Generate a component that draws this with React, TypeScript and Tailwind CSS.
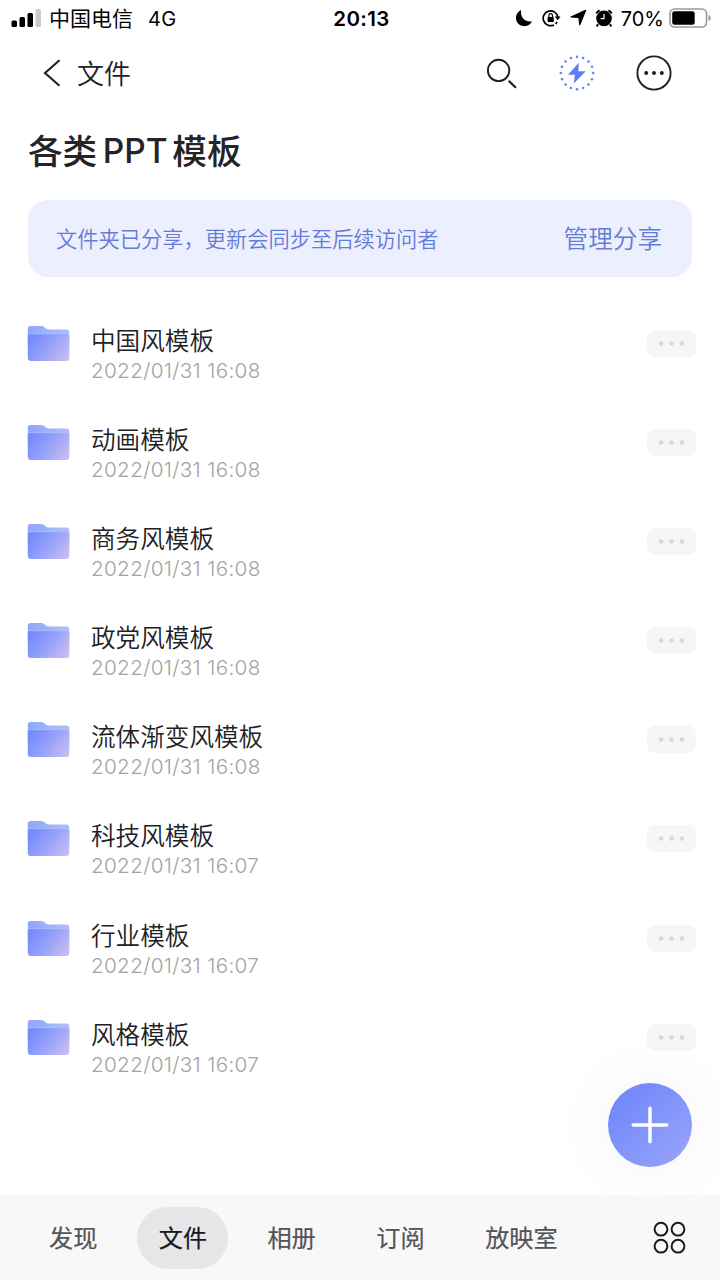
import React from 'react';

const folders = [
  { name: '中国风模板', date: '2022/01/31 16:08' },
  { name: '动画模板', date: '2022/01/31 16:08' },
  { name: '商务风模板', date: '2022/01/31 16:08' },
  { name: '政党风模板', date: '2022/01/31 16:08' },
  { name: '流体渐变风模板', date: '2022/01/31 16:08' },
  { name: '科技风模板', date: '2022/01/31 16:07' },
  { name: '行业模板', date: '2022/01/31 16:07' },
  { name: '风格模板', date: '2022/01/31 16:07' },
];

const rayAngles = Array.from({ length: 16 }, (_, i) => (i * Math.PI) / 8);

function StatusBar() {
  return (
    <div className="grid h-9 grid-cols-[1fr_auto_1fr] items-center pl-[11px] pr-[8px] text-[20px] leading-[36px] text-black">
      <div className="flex items-center">
        <svg width="31" height="20" viewBox="0 0 31 20">
          <rect x="0.5" y="12.5" width="5.5" height="6.5" rx="1.5" />
          <rect x="8.5" y="9" width="5.5" height="10" rx="1.5" />
          <rect x="16.5" y="5" width="5.5" height="14" rx="1.5" />
          <rect x="24.5" y="1" width="5.5" height="18" rx="1.5" fill="#cbcbcb" />
        </svg>
        <span className="ml-[7px] h-[35px] text-[21px]">中国电信</span>
        <span className="ml-[15px] h-[35px] text-[20px] tracking-[0.4px]">4G</span>
      </div>
      <div className="h-[35px] text-[20.5px] font-semibold tracking-[0.4px]">20:13</div>
      <div className="flex items-center justify-end">
        <svg width="18" height="18" viewBox="0 0 18 18">
          <path d="M6.2 1A8.4 8.4 0 1 0 17 12.2C11 14 4.6 8.6 6.2 1Z" />
        </svg>
        <svg className="ml-[9px]" width="19" height="18" viewBox="0 0 19 18">
          <path d="M11.9 15.9A7.4 7.4 0 1 1 15.9 8.2M15 12.8a7.4 7.4 0 0 1-1.4 2" fill="none" stroke="black" strokeWidth="1.7" />
          <path d="m12.7 7.5 5.8 0-2.7 3.7Z" />
          <rect x="5.6" y="8" width="6.2" height="4.9" rx=".7" />
          <path d="M6.9 8V6.5a1.8 1.8 0 0 1 3.6 0V8" fill="none" stroke="black" strokeWidth="1.2" />
        </svg>
        <svg className="ml-[8px]" width="18" height="18" viewBox="0 0 18 18">
          <path d="M16.6 1.4 10.7 15.8 10 9.3 9.2 8.5 2 8Z" stroke="black" strokeWidth="1.2" strokeLinejoin="round" />
        </svg>
        <svg className="ml-[8px]" width="18" height="18" viewBox="0 0 18 18">
          <circle cx="9" cy="9.4" r="7.8" />
          <path d="M1.2 4.2 4.5 1.2M16.8 4.2 13.5 1.2M3.2 15.3 1.7 17.3M14.8 15.3l1.5 2" stroke="black" strokeWidth="2" />
          <path d="M9 5v4.7H5.7" fill="none" stroke="white" strokeWidth="1.2" />
        </svg>
        <span className="ml-[8px] h-[35px] text-[20px]">70%</span>
        <svg className="ml-[5px]" width="43" height="20" viewBox="0 0 43 20">
          <rect x="1" y="1" width="36.5" height="18" rx="4.5" fill="none" stroke="#9a9a9a" strokeWidth="1.6" />
          <rect x="3.2" y="3.2" width="22.5" height="13.6" rx="2.3" />
          <path d="M39.5 7v6c3-1 3-5 0-6Z" fill="#9a9a9a" />
        </svg>
      </div>
    </div>
  );
}

function Header() {
  return (
    <header className="flex h-[74px] items-center pl-[43px] pr-[48px] text-[#1f2024]">
      <svg width="18" height="28" viewBox="0 0 18 28" fill="none" stroke="currentColor" strokeWidth="2.1">
        <path d="M16.5 1.2 2 14 16.5 26.8" />
      </svg>
      <h2 className="ml-[16px] pt-[3px] text-[27px] font-[350] leading-[40px]">文件</h2>
      <div className="ml-auto flex items-center">
        <svg width="32" height="32" viewBox="0 0 32 32" fill="none" stroke="currentColor" strokeWidth="1.9">
          <circle cx="12.6" cy="13.4" r="10.7" />
          <path d="m22.7 23.8 7.2 6.9" strokeWidth="2.2" />
        </svg>
        <svg className="ml-[41px]" width="36" height="36" viewBox="0 0 36 36" fill="#607cf6">
          {rayAngles.map((a) => (
            <circle key={a} cx={18 + 16.2 * Math.cos(a)} cy={18 + 16.2 * Math.sin(a)} r="1.25" />
          ))}
          <path d="M19.7 7.8 9.1 19.7h6.8L14.8 28.6 26.8 16.3h-7.4Z" />
        </svg>
        <svg className="ml-[41px]" width="36" height="36" viewBox="0 0 36 36">
          <circle cx="18" cy="18" r="16.6" fill="none" stroke="currentColor" strokeWidth="1.9" />
          <circle cx="10.2" cy="18" r="2" fill="currentColor" />
          <circle cx="18" cy="18" r="2" fill="currentColor" />
          <circle cx="25.8" cy="18" r="2" fill="currentColor" />
        </svg>
      </div>
    </header>
  );
}

function FolderIcon() {
  return (
    <svg className="mt-[10px] shrink-0" width="44" height="37" viewBox="0 0 44 37">
      <defs>
        <linearGradient id="folder-front" x1="0" y1=".3" x2="1" y2=".8">
          <stop offset="0" stopColor="#748bfb" />
          <stop offset=".45" stopColor="#949ffa" />
          <stop offset="1" stopColor="#c5bdf1" />
        </linearGradient>
        <linearGradient id="folder-back" x1="0" y1="0" x2="1" y2="0">
          <stop offset="0" stopColor="#8fa7f8" />
          <stop offset="1" stopColor="#acc1f8" />
        </linearGradient>
      </defs>
      <g transform="translate(0 .5)">
        <path d="M.8 3.3Q.8.6 3.5.6H14q2 0 3.2 1l2 1.6q1 .8 2.5.8H39.5q2.8 0 2.8 2.8V20H.8Z" fill="url(#folder-back)" />
        <path d="M.8 10q0-2 2-2h37.5q2 0 2 2v22.4q0 3-3 3H3.8q-3 0-3-3Z" fill="url(#folder-front)" />
        <path d="M1.3 8.2h40.6" stroke="#b0c4ff" strokeWidth=".8" />
      </g>
    </svg>
  );
}

function FolderRow({ name, date }: { name: string; date: string }) {
  return (
    <li className="flex h-[99.1px] items-start">
      <FolderIcon />
      <div className="ml-[20px] pt-[10px]">
        <div className="text-[24.6px] font-[350] leading-[32px] text-[#202124]">{name}</div>
        <div className="mt-[-1px] text-[20.7px] font-[350] leading-[29px] tracking-[0.32px] text-[#a3a3a6]">{date}</div>
      </div>
      <button className="ml-auto mt-[15px] flex h-[27px] w-[49px] items-center justify-center rounded-[8px] bg-[#f6f6f8]">
        <svg width="27" height="5" viewBox="0 0 27 5" fill="#d8d8dc">
          <circle cx="3.1" cy="2.5" r="2.3" />
          <circle cx="13.5" cy="2.5" r="2.3" />
          <circle cx="23.9" cy="2.5" r="2.3" />
        </svg>
      </button>
    </li>
  );
}

function BottomNav() {
  return (
    <nav className="flex h-[85px] items-center bg-[#f8f8f8] pl-[49px] pr-[34px] text-[24.2px] leading-[36px] text-[#545456] [-webkit-text-stroke:0.2px_currentColor]">
      <span className="pt-[3px]">发现</span>
      <span className="ml-[40px] flex h-[62px] w-[91px] items-center justify-center rounded-[31px] bg-[#e6e6e9] pt-[3px] text-[#18181b]">文件</span>
      <span className="ml-[39px] pt-[3px]">相册</span>
      <span className="ml-[60.5px] pt-[3px]">订阅</span>
      <span className="ml-[60.5px] pt-[3px]">放映室</span>
      <svg className="ml-auto" width="33" height="33" viewBox="0 0 33 33" fill="none" stroke="#1c1c20" strokeWidth="2">
        <circle cx="8" cy="8.2" r="6.4" />
        <circle cx="25" cy="8.2" r="6.4" />
        <circle cx="8" cy="25.2" r="6.4" />
        <circle cx="25" cy="25.2" r="6.4" />
      </svg>
    </nav>
  );
}

export default function App() {
  return (
    <div className="relative flex h-[1280px] w-[720px] flex-col overflow-hidden bg-white font-['Inter','Noto_Sans_CJK_SC',sans-serif]">
      <StatusBar />
      <Header />
      <main className="flex-1 pl-[27px] pr-[24px]">
        <h1 className="mt-[17px] flex h-[48px] items-center pl-px text-[34.6px] font-medium leading-[48px] text-[#242426]">
          <span>各类</span>
          <span className="ml-[5.5px] text-[33.5px] tracking-[0.1px]">PPT</span>
          <span className="ml-[4.5px]">模板</span>
        </h1>
        <section className="ml-px mr-[4px] mt-[25px] flex h-[77px] items-center justify-between rounded-[20px] bg-[#eceffd] pl-[28px] pr-[30px] text-[#657bd8]">
          <p className="text-[21.25px] font-[350] leading-[32px]">文件夹已分享，更新会同步至后续访问者</p>
          <button className="pt-px text-[24.6px] font-[350] leading-[36px]">管理分享</button>
        </section>
        <ul className="mt-[38px]">
          {folders.map((f) => (
            <FolderRow key={f.name} {...f} />
          ))}
        </ul>
      </main>
      <BottomNav />
      <button
        aria-label="新建"
        className="absolute right-[28px] top-[1083px] flex size-[84px] items-center justify-center rounded-full bg-linear-to-br from-[#6c82fc] to-[#99a5f7] shadow-[0_0_70px_rgba(0,0,0,0.06)]"
      >
        <svg width="38" height="38" viewBox="0 0 38 38" stroke="white" strokeWidth="3.5" strokeLinecap="round">
          <path d="M19 2.2v33.6M2.2 19h33.6" />
        </svg>
      </button>
    </div>
  );
}
